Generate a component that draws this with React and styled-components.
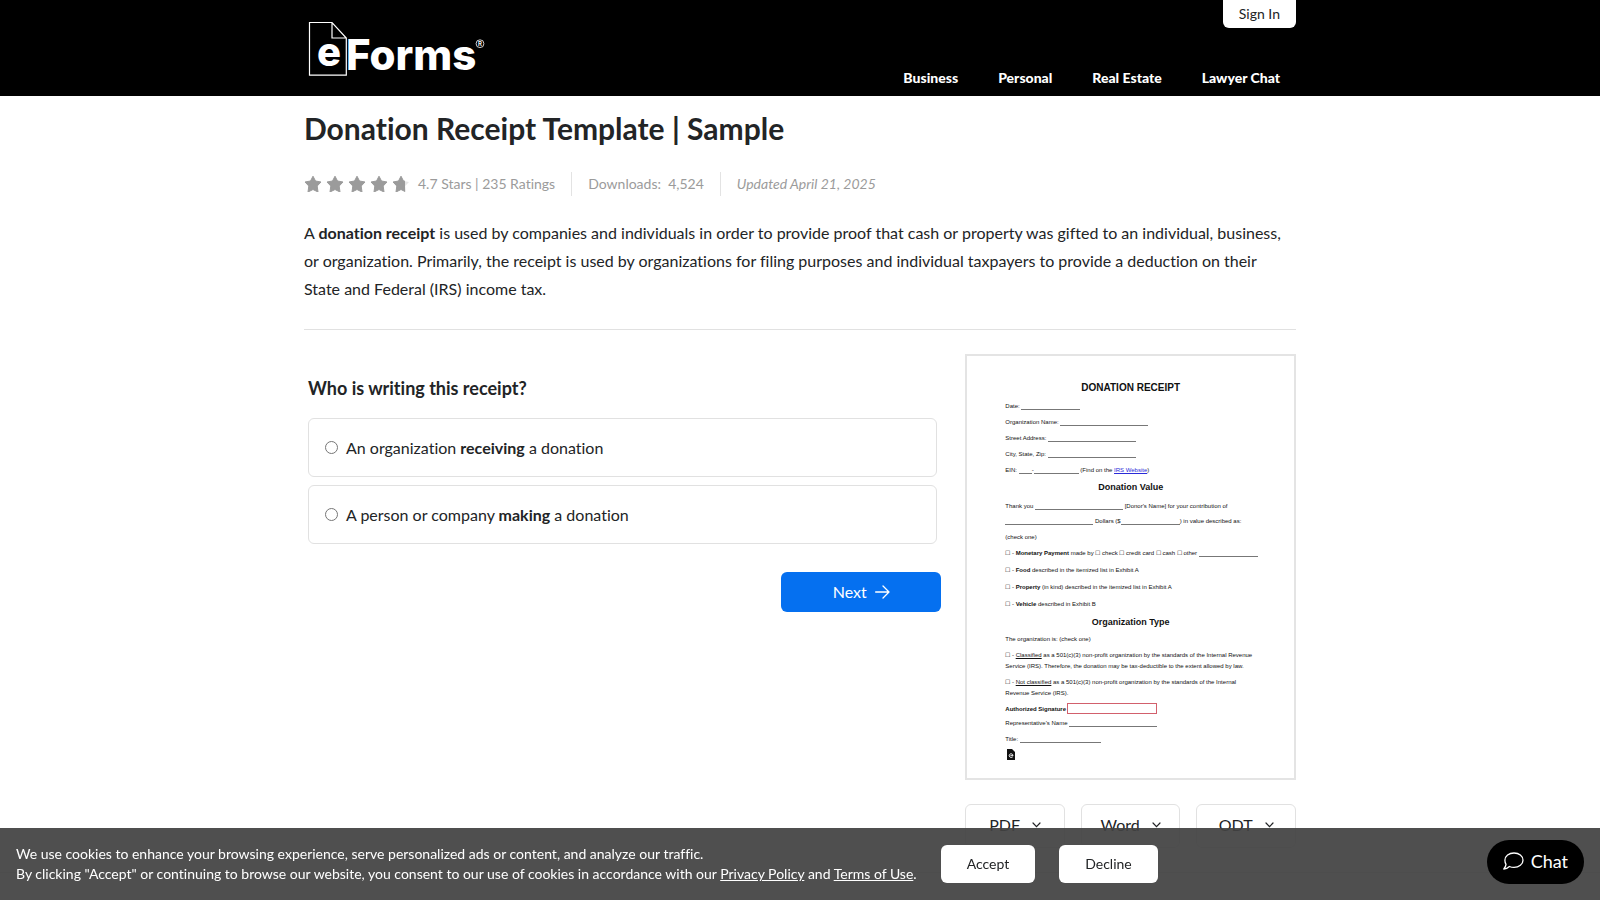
import React from "react";
import styled, { createGlobalStyle } from "styled-components";

const GlobalStyle = createGlobalStyle`
  * {
    box-sizing: border-box;
  }
  body {
    margin: 0;
    background: #fff;
    color: #222426;
    font-family: Lato, "Liberation Sans", sans-serif;
    font-size: 16px;
    font-variant-ligatures: none;
    line-height: 28px;
  }
  button {
    font-family: inherit;
    cursor: pointer;
  }
`;

const Container = styled.div`
  width: 100%;
  max-width: 1024px;
  margin: 0 auto;
  padding: 0 16px;
`;

const Header = styled.header`
  background: #000;
`;

const HeaderInner = styled(Container)`
  display: flex;
  justify-content: space-between;
  min-height: 96px;
`;

const LogoLink = styled.a`
  padding: 20px 4px 0;
  > svg {
    display: block;
  }
`;

const HeaderRight = styled.div`
  display: flex;
  flex-direction: column;
  align-items: flex-end;
  justify-content: space-between;
`;

const SignIn = styled.a`
  padding: 0 16px;
  border-radius: 0 0 6px 6px;
  background: #fff;
  color: #222426;
  font-size: 14px;
  line-height: 28px;
  text-decoration: none;
`;

const Nav = styled.nav`
  display: flex;
  gap: 40px;
  padding: 0 16px 8px;
  > a {
    color: #fff;
    font-size: 14px;
    font-weight: 900;
    line-height: 20px;
    text-decoration: none;
  }
`;

const Title = styled.h1`
  margin: 0;
  padding: 12px 0 24px;
  font-size: 30px;
  line-height: 40px;
`;

const Meta = styled.div`
  display: flex;
  align-items: center;
  color: #9b9b9b;
  font-size: 14px;
  line-height: 24px;
  > span + span {
    margin-left: 16px;
    padding-left: 16px;
    border-left: 1px solid #e3e3e3;
  }
`;

const Rating = styled.span`
  display: flex;
  align-items: center;
  gap: 8px;
`;

const Updated = styled.span`
  font-style: italic;
`;

const Intro = styled.p`
  margin: 0;
  padding: 23px 0 26px;
  border-bottom: 1px solid #e1e1e1;
`;

const Columns = styled.div`
  display: grid;
  grid-template-columns: repeat(3, minmax(0, 1fr));
  padding: 24px 0;
`;

const FormColumn = styled.form`
  grid-column: span 2;
  padding-right: 24px;
`;

const Question = styled.fieldset`
  display: flex;
  flex-direction: column;
  gap: 8px;
  margin: 0;
  padding: 20px 4px 0;
  border: 0;
  > legend {
    float: left;
    padding: 0 0 8px;
    font-size: 18px;
    font-weight: 700;
    line-height: 28px;
  }
`;

const Option = styled.label`
  display: flex;
  align-items: center;
  gap: 8px;
  padding: 15px 16px;
  border: 1px solid #e1e1e1;
  border-radius: 6px;
  line-height: 27px;
  cursor: pointer;
  > input {
    width: 13px;
    height: 13px;
    margin: 0;
  }
`;

const NextButton = styled.button`
  display: flex;
  align-items: center;
  justify-content: center;
  gap: 8px;
  width: 160px;
  height: 40px;
  margin: 28px 0 0 auto;
  padding: 0 0 2px;
  border: 0;
  border-radius: 6px;
  background: #0570f0;
  color: #fff;
  font-size: 16px;
`;

const Preview = styled.article`
  padding: 24px 38px 16px;
  border: 2px solid #e4e4e4;
  background: #fff;
  color: #111;
  font-family: "Liberation Sans", Arial, sans-serif;
  font-size: 6px;
  line-height: 11px;
  white-space: nowrap;
  > svg {
    display: block;
    margin: 2px;
  }
`;

const PreviewTitle = styled.h2`
  margin: 0 0 3px;
  font-size: 10px;
  line-height: 16px;
  text-align: center;
`;

const PreviewHeading = styled.h3`
  margin: 0 0 2px;
  font-size: 9px;
  line-height: 19px;
  text-align: center;
`;

const Rows = styled.div`
  display: grid;
  grid-auto-rows: 1fr;
  align-items: center;
  min-height: ${(props) => props.$height}px;
`;

const PreviewText = styled.p`
  margin: 0 0 5px;
  &:last-of-type {
    margin-bottom: 2px;
  }
`;

const PreviewLink = styled.a`
  color: #2a2ad8;
`;

const Blank = styled.span`
  display: inline-block;
  width: ${(props) => props.$width}px;
  border-bottom: 1px solid #777;
  vertical-align: -2px;
`;

const Signature = styled.span`
  display: inline-block;
  width: 90px;
  height: 11px;
  margin-left: 1px;
  border: 1px solid #d2606c;
  vertical-align: -3px;
`;

const Downloads = styled.div`
  display: grid;
  grid-template-columns: repeat(3, 1fr);
  gap: 16px;
  margin-top: 24px;
`;

const DownloadButton = styled.button`
  display: flex;
  align-items: center;
  justify-content: center;
  gap: 12px;
  height: 44px;
  padding: 0 0 4px;
  border: 1px solid #e1e1e1;
  border-radius: 6px;
  background: #fff;
  color: #222426;
  font-size: 16px;
`;

const PageFooter = styled.footer`
  min-height: 24px;
  border-top: 1px solid #e1e1e1;
`;

const CookieBar = styled.div`
  position: fixed;
  right: 0;
  bottom: 0;
  left: 0;
  display: flex;
  align-items: center;
  gap: 24px;
  min-height: 72px;
  padding: 0 16px;
  background: rgba(66, 66, 66, 0.93);
  color: #fff;
  font-size: 14px;
  line-height: 20px;
  > p {
    margin: 0;
  }
  a {
    color: #fff;
  }
`;

const CookieButton = styled.button`
  height: 38px;
  padding: 0 26px 2px;
  border: 0;
  border-radius: 6px;
  background: #fff;
  color: #222426;
  font-size: 14px;
`;

const ChatButton = styled.button`
  position: fixed;
  right: 16px;
  bottom: 16px;
  display: flex;
  align-items: center;
  gap: 7px;
  height: 44px;
  padding: 0 16px 2px;
  border: 0;
  border-radius: 22px;
  background: #000;
  color: #fff;
  font-size: 18px;
`;

const STAR =
  "M8 0.2 L10.5 5 L16 6 L12.2 10 L13 16 L8 13.5 L3 16 L3.8 10 L0 6 L5.5 5 Z";

function Logo() {
  return (
    <svg width="182" height="58" viewBox="0 0 182 58" role="img" aria-label="eForms">
      <path
        d="M1.5 2.5 H24 L38.3 18 V55.2 H1.5 Z M24 2.5 V18 H38.3"
        fill="none"
        stroke="#fff"
        strokeWidth="1.2"
      />
      <g fill="#fff" fontFamily="Inter, sans-serif" fontWeight="800">
        <text x="9" y="46" fontSize="40">
          e
        </text>
        <text x="38" y="50" fontSize="42">
          Forms
        </text>
        <text x="172" y="26" fontSize="6" fontWeight="600" textAnchor="middle">
          R
        </text>
      </g>
      <circle cx="172" cy="23.7" r="3.9" fill="none" stroke="#fff" strokeWidth="0.8" />
    </svg>
  );
}

function Stars() {
  return (
    <svg width="106" height="16" viewBox="0 0 106 16" aria-hidden="true">
      <defs>
        <clipPath id="partial">
          <rect width="12" height="16" />
        </clipPath>
      </defs>
      <g fill="#9b9b9b" stroke="#9b9b9b" strokeWidth="1" strokeLinejoin="round">
        {[0, 22, 44, 66].map((x) => (
          <path key={x} d={STAR} transform={`translate(${x + 1} 0)`} />
        ))}
        <g transform="translate(89 0)">
          <path d={STAR} fill="#e6e6e6" stroke="none" />
          <path d={STAR} clipPath="url(#partial)" />
        </g>
      </g>
    </svg>
  );
}

function Arrow() {
  return (
    <svg width="15" height="16" viewBox="0 0 15 16" fill="none" stroke="#fff" strokeWidth="1.3">
      <path d="M0.6 9 H14 M8 3 L14 9 L8 15" strokeLinecap="round" strokeLinejoin="round" />
    </svg>
  );
}

function Chevron() {
  return (
    <svg width="9" height="8" viewBox="0 0 9 8" fill="none" stroke="#222426" strokeWidth="1.2">
      <path d="M1 3 L4.5 6.6 L8 3" strokeLinecap="round" />
    </svg>
  );
}

function Bubble() {
  return (
    <svg width="21" height="18" viewBox="0 0 21 18" fill="none" stroke="#fff" strokeWidth="1.3">
      <path
        d="M11 1 C16 1 20 4.1 20 8.2 C20 12.3 16 15.4 11 15.4 C9.4 15.4 7.8 15.1 6.4 14.5 C4.9 15.9 2.8 16.9 0.8 17 C2 15.7 2.9 14.2 3 12.4 C2.3 11.2 1.9 9.8 1.9 8.2 C1.9 4.1 6 1 11 1 Z"
        strokeLinejoin="round"
      />
    </svg>
  );
}

function DocIcon() {
  return (
    <svg width="8" height="11" viewBox="0 0 8 11">
      <path d="M0 0 H5 L8 3 V11 H0 Z" fill="#111" />
      <path d="M5.6 8 C4.6 9 2.2 8.4 2.2 6.6 C2.2 4.2 6 4.2 6 6.7 H3.4" fill="none" stroke="#fff" />
    </svg>
  );
}

function ReceiptPreview() {
  return (
    <Preview>
      <PreviewTitle>DONATION RECEIPT</PreviewTitle>
      <Rows $height={79}>
        <div>
          Date: <Blank $width={59} />
        </div>
        <div>
          Organization Name: <Blank $width={88} />
        </div>
        <div>
          Street Address: <Blank $width={88} />
        </div>
        <div>
          City, State, Zip: <Blank $width={88} />
        </div>
        <div>
          EIN: <Blank $width={13} />-<Blank $width={45} /> (Find on the{" "}
          <PreviewLink href="#irs">IRS Website</PreviewLink>)
        </div>
      </Rows>
      <PreviewHeading>Donation Value</PreviewHeading>
      <Rows $height={46}>
        <div>
          Thank you <Blank $width={88} /> [Donor's Name] for your contribution of
        </div>
        <div>
          <Blank $width={88} /> Dollars ($
          <Blank $width={59} />) in value described as:
        </div>
        <div>(check one)</div>
      </Rows>
      <Rows $height={68}>
        <div>
          ☐ - <b>Monetary Payment</b> made by ☐ check ☐ credit card ☐ cash ☐ other{" "}
          <Blank $width={59} />
        </div>
        <div>
          ☐ - <b>Food</b> described in the itemized list in Exhibit A
        </div>
        <div>
          ☐ - <b>Property</b> (in kind) described in the itemized list in Exhibit A
        </div>
        <div>
          ☐ - <b>Vehicle</b> described in Exhibit B
        </div>
      </Rows>
      <PreviewHeading>Organization Type</PreviewHeading>
      <PreviewText>The organization is: (check one)</PreviewText>
      <PreviewText>
        ☐ - <u>Classified</u> as a 501(c)(3) non-profit organization by the standards of the
        Internal Revenue
        <br />
        Service (IRS). Therefore, the donation may be tax-deductible to the extent allowed by law.
      </PreviewText>
      <PreviewText>
        ☐ - <u>Not classified</u> as a 501(c)(3) non-profit organization by the standards of the
        Internal
        <br />
        Revenue Service (IRS).
      </PreviewText>
      <Rows $height={46}>
        <div>
          <b>Authorized Signature</b>
          <Signature />
        </div>
        <div>
          Representative's Name <Blank $width={88} />
        </div>
        <div>
          Title: <Blank $width={81} />
        </div>
      </Rows>
      <DocIcon />
    </Preview>
  );
}

function App() {
  return (
    <>
      <GlobalStyle />
      <Header>
        <HeaderInner>
          <LogoLink href="#home">
            <Logo />
          </LogoLink>
          <HeaderRight>
            <SignIn href="#sign-in">Sign In</SignIn>
            <Nav>
              <a href="#business">Business</a>
              <a href="#personal">Personal</a>
              <a href="#real-estate">Real Estate</a>
              <a href="#lawyer-chat">Lawyer Chat</a>
            </Nav>
          </HeaderRight>
        </HeaderInner>
      </Header>
      <Container as="main">
        <Title>Donation Receipt Template | Sample</Title>
        <Meta>
          <Rating>
            <Stars />
            4.7 Stars | 235 Ratings
          </Rating>
          <span>Downloads: &nbsp;4,524</span>
          <Updated>Updated April 21, 2025</Updated>
        </Meta>
        <Intro>
          A <b>donation receipt</b> is used by companies and individuals in order to provide proof
          that cash or property was gifted to an individual, business, or organization. Primarily,
          the receipt is used by organizations for filing purposes and individual taxpayers to
          provide a deduction on their State and Federal (IRS) income tax.
        </Intro>
        <Columns>
          <FormColumn onSubmit={(e) => e.preventDefault()}>
            <Question>
              <legend>Who is writing this receipt?</legend>
              <Option>
                <input type="radio" name="writer" value="receiving" />
                <span>
                  An organization <b>receiving</b> a donation
                </span>
              </Option>
              <Option>
                <input type="radio" name="writer" value="making" />
                <span>
                  A person or company <b>making</b> a donation
                </span>
              </Option>
            </Question>
            <NextButton type="submit">
              Next
              <Arrow />
            </NextButton>
          </FormColumn>
          <aside>
            <ReceiptPreview />
            <Downloads>
              {["PDF", "Word", "ODT"].map((format) => (
                <DownloadButton key={format} type="button">
                  {format}
                  <Chevron />
                </DownloadButton>
              ))}
            </Downloads>
          </aside>
        </Columns>
      </Container>
      <PageFooter />
      <CookieBar>
        <p>
          We use cookies to enhance your browsing experience, serve personalized ads or content,
          and analyze our traffic.
          <br />
          By clicking "Accept" or continuing to browse our website, you consent to our use of
          cookies in accordance with our <a href="#privacy">Privacy Policy</a> and{" "}
          <a href="#terms">Terms of Use</a>.
        </p>
        <CookieButton type="button">Accept</CookieButton>
        <CookieButton type="button">Decline</CookieButton>
      </CookieBar>
      <ChatButton type="button">
        <Bubble />
        Chat
      </ChatButton>
    </>
  );
}

export default App;
